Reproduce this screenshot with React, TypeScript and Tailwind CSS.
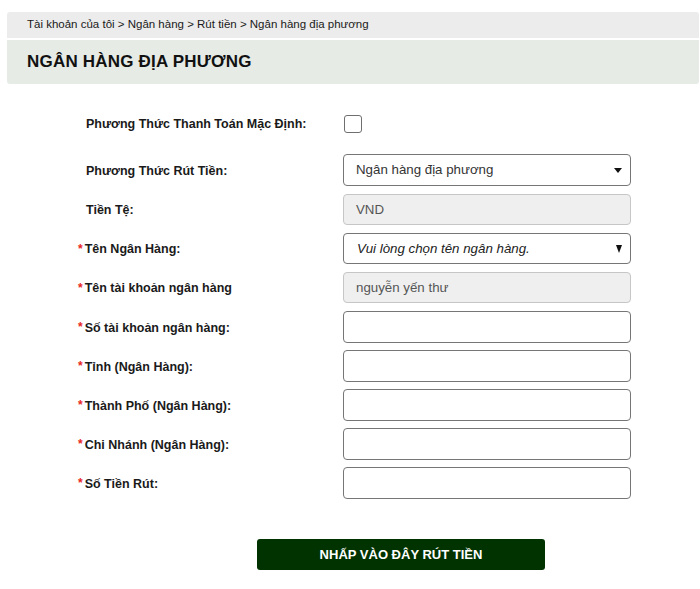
import React from "react";

const Star = () => <span className="text-[#e8251f] text-[12px] mr-[2px] relative top-[-1px]">*</span>;

const Arrow = ({ tall }: { tall?: boolean }) => (
  <svg width={tall ? 6 : 8} height={tall ? 8 : 5} viewBox={tall ? "0 0 6 8" : "0 0 8 5"} className="fill-[#111]">
    {tall ? <polygon points="0,0 6,0 3,8" /> : <polygon points="0,0 8,0 4,5" />}
  </svg>
);

const Label = ({ text, required }: { text: string; required?: boolean }) => (
  <div className="w-[265px] shrink-0 flex items-center text-[12.5px] font-bold text-[#1a1a1a] relative top-[1px]">
    {required ? <Star /> : <span className="w-[8px]" />}
    <span>{text}</span>
  </div>
);

export default function App() {
  const textRows = [
    "Số tài khoản ngân hàng:",
    "Tỉnh (Ngân Hàng):",
    "Thành Phố (Ngân Hàng):",
    "Chi Nhánh (Ngân Hàng):",
    "Số Tiền Rút:",
  ];

  return (
    <div className="w-[700px] h-[589px] bg-white pt-[12px] pl-[7px] pr-[1px]" style={{ fontFamily: '"Liberation Sans", Arial, sans-serif' }}>
      {/* Breadcrumb */}
      <div className="h-[26px] bg-[#ececec] rounded-t-[3px] flex items-center pl-[20px] text-[11.5px] text-[#1a1a1a]">
        Tài khoản của tôi &gt; Ngân hàng &gt; Rút tiền &gt; Ngân hàng địa phương
      </div>

      {/* Title */}
      <div className="mt-[2px] h-[44px] bg-[#e6ebe6] rounded-b-[3px] flex items-center pl-[20px]">
        <h1 className="text-[17px] font-bold text-[#111] tracking-[0.2px]">NGÂN HÀNG ĐỊA PHƯƠNG</h1>
      </div>

      {/* Form */}
      <div className="pl-[71px] pt-[24px] flex flex-col">
        <div className="flex items-center h-[31px]">
          <Label text="Phương Thức Thanh Toán Mặc Định:" />
          <div className="ml-[1px] w-[18px] h-[18px] border-[1.5px] border-[#6f6f6f] rounded-[3px] bg-white" />
        </div>

        <div className="flex items-center h-[32px] mt-[15px]">
          <Label text="Phương Thức Rút Tiền:" />
          <div className="w-[288px] h-[32px] border border-[#767676] rounded-[4px] flex items-center justify-between pl-[12px] pr-[8px] text-[13.3px] text-[#333]">
            <span>Ngân hàng địa phương</span>
            <Arrow />
          </div>
        </div>

        <div className="flex items-center h-[31px] mt-[8px]">
          <Label text="Tiền Tệ:" />
          <div className="w-[288px] h-[31px] border border-[#c6c6c6] bg-[#efefef] rounded-[4px] flex items-center pl-[12px] text-[13.3px] text-[#555]">
            VND
          </div>
        </div>

        <div className="flex items-center h-[31px] mt-[8px]">
          <Label text="Tên Ngân Hàng:" required />
          <div className="w-[288px] h-[31px] border border-[#767676] rounded-[4px] flex items-center justify-between pl-[13px] pr-[8px] text-[13.3px] italic text-[#222]">
            <span>Vui lòng chọn tên ngân hàng.</span>
            <Arrow tall />
          </div>
        </div>

        <div className="flex items-center h-[31px] mt-[8px]">
          <Label text="Tên tài khoản ngân hàng" required />
          <div className="w-[288px] h-[31px] border border-[#c6c6c6] bg-[#efefef] rounded-[4px] flex items-center pl-[12px] text-[13.3px] text-[#555]">
            nguyễn yến thư
          </div>
        </div>

        {textRows.map((t, i) => (
          <div key={t} className={`flex items-center h-[32px] ${i === 0 ? "mt-[8px]" : "mt-[7px]"}`}>
            <Label text={t} required />
            <input
              type="text"
              className="w-[288px] h-[32px] border border-[#767676] rounded-[4px] bg-white px-[12px] text-[13.3px] outline-none"
            />
          </div>
        ))}

        <button className="mt-[40px] ml-[179px] w-[288px] h-[31px] bg-[#013301] rounded-[3px] text-white text-[13px] font-bold">
          NHẤP VÀO ĐÂY RÚT TIỀN
        </button>
      </div>
    </div>
  );
}
